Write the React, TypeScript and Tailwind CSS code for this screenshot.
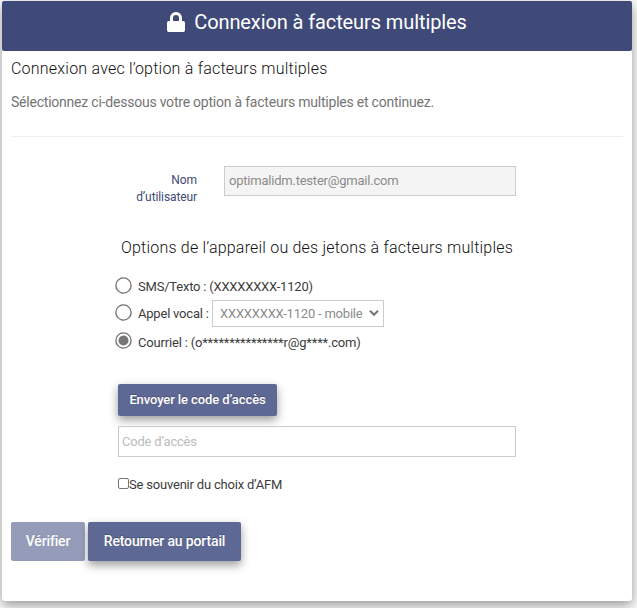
import { useState } from "react"

const buttonClass =
    "rounded-[2px] bg-[#5e6894] text-white font-medium [text-shadow:0_-1px_0_rgba(0,0,0,0.25)]"

function Radio({ checked, onClick }: { checked: boolean; onClick: () => void }) {
    return (
        <button type="button" role="radio" aria-checked={checked} onClick={onClick} className="mb-[2px] size-[17px] shrink-0">
            <svg viewBox="0 0 17 17" className="size-[17px]">
                <circle cx="8.5" cy="8.5" r="7.6" fill="#fff" stroke="#757575" strokeWidth="1.4" />
                {checked && <circle cx="8.5" cy="8.5" r="5" fill="#757575" />}
            </svg>
        </button>
    )
}

export default function App() {
    const [method, setMethod] = useState("email")
    const [remember, setRemember] = useState(false)

    return (
        <div className="h-[608px] w-[637px] overflow-hidden bg-[#fafafa] pt-px pl-[2px] font-[Roboto,sans-serif] text-[#3c3c3c]">
            <div className="h-[600px] w-[630px] rounded-[3px] bg-white shadow-[0_4px_12px_rgba(0,0,0,0.4)]">
                {/* Header */}
                <header className="flex h-[50px] items-start justify-center rounded-[2px] bg-[#404a78] pt-[9px] text-white">
                    <svg viewBox="0 0 18 20" className="mt-[2px] mr-[9px] h-5 w-[18px]" fill="currentColor">
                        <path
                            fillRule="evenodd"
                            d="M3 9V6a6 6 0 0 1 12 0v3h1.2A1.8 1.8 0 0 1 18 10.8v7.4a1.8 1.8 0 0 1-1.8 1.8H1.8A1.8 1.8 0 0 1 0 18.2v-7.4A1.8 1.8 0 0 1 1.8 9zM6 9h6V6a3 3 0 0 0-6 0z"
                        />
                    </svg>
                    <h1 className="text-[20px] leading-6 tracking-[-0.1px] whitespace-nowrap">Connexion à facteurs multiples</h1>
                </header>

                <div className="px-[9px]">
                    {/* Intro */}
                    <h2 className="pt-2 text-[16px] leading-5 font-light tracking-[0.22px] text-[#111]">
                        Connexion avec l’option à facteurs multiples
                    </h2>
                    <p className="mt-[13px] text-[14px] leading-5 tracking-[-0.22px] text-[#757575]">
                        Sélectionnez ci-dessous votre option à facteurs multiples et continuez.
                    </p>
                    <hr className="mt-6 border-[#eee]" />

                    {/* Username */}
                    <div className="mt-[29px] flex pl-[107px]">
                        <label className="mt-[6px] w-[79px] text-right text-[12px] leading-[17px] tracking-[-0.1px] text-[#404a78]">
                            Nom d’utilisateur
                        </label>
                        <input
                            readOnly
                            value="optimalidm.tester@gmail.com"
                            className="ml-[27px] h-[30px] w-[292px] border border-[#ccc] bg-[#f4f4f4] px-1 pb-px text-[13px] tracking-[-0.22px] text-[#8b8b8b] outline-none"
                        />
                    </div>

                    {/* Options */}
                    <div className="pl-[107px]">
                        <h2 className="mt-8 pl-[3px] text-[16px] leading-5 font-light tracking-[0.2px] text-[#111]">
                            Options de l’appareil ou des jetons à facteurs multiples
                        </h2>
                        <div role="radiogroup" className="-ml-[3px] text-[13px] tracking-[-0.21px]">
                            <div className="mt-[18px] flex h-5 items-center gap-[6px]">
                                <Radio checked={method === "sms"} onClick={() => setMethod("sms")} />
                                <span className="pt-[2px]">SMS/Texto : (XXXXXXXX-1120)</span>
                            </div>
                            <div className="mt-1 flex h-[27px] items-center gap-[6px]">
                                <Radio checked={method === "voice"} onClick={() => setMethod("voice")} />
                                <span className="w-[71px] whitespace-nowrap">Appel vocal :</span>
                                <div className="-ml-[3px] flex h-[27px] w-[172px] items-center border border-[#ccc] pl-[7px] text-[#8b8b8b]">
                                    <span className="whitespace-nowrap">XXXXXXXX-1120 - mobile</span>
                                    <svg viewBox="0 0 10 6" className="mr-1 mb-px ml-auto h-[6px] w-[10px]" fill="none" stroke="#757575" strokeWidth="2">
                                        <path d="M1 .8l4 4 4-4" />
                                    </svg>
                                </div>
                            </div>
                            <div className="mt-1 flex h-5 items-center gap-[6px]">
                                <Radio checked={method === "email"} onClick={() => setMethod("email")} />
                                <span className="pt-[3px] tracking-[-0.18px]">Courriel : (o***************r@g****.com)</span>
                            </div>
                        </div>

                        <button
                            type="button"
                            className={`${buttonClass} mt-[33px] block h-8 w-[159px] pb-px text-[13px] tracking-[-0.1px] shadow-[0_4px_10px_rgba(0,0,0,0.4)]`}
                        >
                            Envoyer le code d’accès
                        </button>
                        <input
                            placeholder="Code d’accès"
                            className="mt-[10px] block h-[31px] w-[398px] border border-[#ccc] px-[3px] text-[13px] tracking-[-0.2px] outline-none placeholder:text-[#bbb]"
                        />
                        <label className="mt-5 flex h-4 items-center text-[13px] tracking-[-0.2px]">
                            <input
                                type="checkbox"
                                checked={remember}
                                onChange={() => setRemember(!remember)}
                                className="size-[11px] -translate-y-0.5 appearance-none rounded-[2px] border border-[#757575] checked:bg-[#757575]"
                            />
                            <span>Se souvenir du choix d’AFM</span>
                        </label>
                    </div>

                    {/* Actions */}
                    <div className="mt-[29px] flex gap-[3px] text-[14px] tracking-[-0.15px]">
                        <button type="button" disabled className={`${buttonClass} h-[39px] w-[74px] opacity-65`}>
                            Vérifier
                        </button>
                        <button type="button" className={`${buttonClass} h-[39px] w-[153px] shadow-[0_4px_10px_rgba(0,0,0,0.4)]`}>
                            Retourner au portail
                        </button>
                    </div>
                </div>
            </div>
        </div>
    )
}
